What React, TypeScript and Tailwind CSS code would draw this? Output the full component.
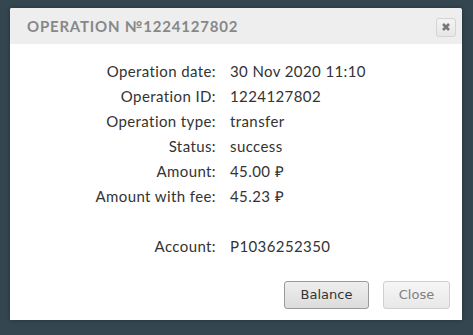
import React from "react";

const rows: [string, React.ReactNode][] = [
  ["Operation date:", "30 Nov 2020 11:10"],
  ["Operation ID:", "1224127802"],
  ["Operation type:", "transfer"],
  ["Status:", "success"],
  ["Amount:", "45.00 ₽"],
  ["Amount with fee:", "45.23 ₽"],
];

export default function App() {
  return (
    <div className="w-[473px] h-[335px] bg-[#344650] pt-[8px] pl-[10px] overflow-hidden">
      <div className="w-[452px] h-[312px] bg-white rounded-tr-[4px] rounded-tl-[2px] flex flex-col shadow-[0_0_4px_rgba(0,0,0,0.3)]">
        <div className="h-[36px] bg-[#eeeeee] flex items-center justify-between pl-[17px] pr-[6px] rounded-t-[2px]">
          <div className="text-[15px] tracking-[0.8px] font-bold text-[#888888] leading-none pt-[1px]" style={{ fontFamily: "Lato, sans-serif" }}>
            OPERATION №1224127802
          </div>
          <button className="w-[20px] h-[19px] mt-[2px] border border-[#d4d4d4] rounded-[3px] bg-gradient-to-b from-[#f4f4f4] to-[#e6e6e6] flex items-center justify-center">
            <svg width="10" height="10" viewBox="0 0 10 10">
              <path d="M2 2 L8 8 M8 2 L2 8" stroke="#777" strokeWidth="2.6" strokeLinecap="butt" />
            </svg>
          </button>
        </div>
        <div className="flex-1 pt-[15px]" style={{ fontFamily: "Lato, sans-serif" }}>
          <div className="grid grid-cols-[206px_1fr] gap-x-[14px] text-[15px] tracking-[0.4px] text-[#333333] leading-[25px]">
            {rows.map(([l, v]) => (
              <React.Fragment key={l}>
                <div className="text-right">{l}</div>
                <div>{v}</div>
              </React.Fragment>
            ))}
            <div className="text-right mt-[25px]">Account:</div>
            <div className="mt-[25px]">P1036252350</div>
          </div>
        </div>
        <div className="flex justify-end gap-[14px] pr-[12px] pb-[11px]" style={{ fontFamily: "'DejaVu Sans', sans-serif" }}>
          <button className="w-[85px] h-[28px] rounded-[3px] border border-[#9a9a9a] bg-gradient-to-b from-[#eeeeee] to-[#dcdcdc] text-[13px] text-[#333]">
            Balance
          </button>
          <button className="w-[67px] h-[28px] rounded-[3px] border border-[#cfcfcf] bg-gradient-to-b from-[#f6f6f6] to-[#e8e8e8] text-[13px] text-[#808080]">
            Close
          </button>
        </div>
      </div>
    </div>
  );
}
